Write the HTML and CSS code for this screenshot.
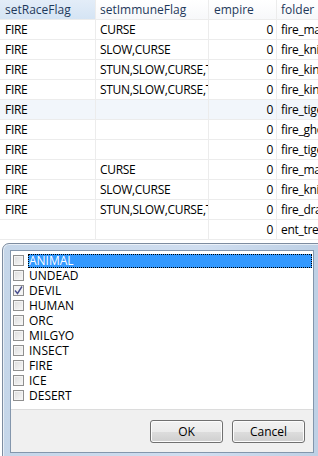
FILE: index.html
```html
<!DOCTYPE html>
<html lang="en">
  <head>
    <meta charset="UTF-8"/>
    <title>Mob flags</title>
    <link rel="stylesheet" href="styles.css">
  </head>
  <body>
    <div class="grid">
      <div class="row head">
        <div class="cell c1 sel">setRaceFlag</div>
        <div class="cell c2">setImmuneFlag</div>
        <div class="cell c3 left">empire</div>
        <div class="cell c4">folder</div>
      </div>
      <div class="row"><div class="cell c1">FIRE</div><div class="cell c2">CURSE</div><div class="cell c3">0</div><div class="cell c4">fire_mage</div></div>
      <div class="row"><div class="cell c1">FIRE</div><div class="cell c2">SLOW,CURSE</div><div class="cell c3">0</div><div class="cell c4">fire_knight</div></div>
      <div class="row"><div class="cell c1">FIRE</div><div class="cell c2">STUN,SLOW,CURSE,TERROR</div><div class="cell c3">0</div><div class="cell c4">fire_king</div></div>
      <div class="row"><div class="cell c1">FIRE</div><div class="cell c2">STUN,SLOW,CURSE,TERROR</div><div class="cell c3">0</div><div class="cell c4">fire_king</div></div>
      <div class="row tint"><div class="cell c1">FIRE</div><div class="cell c2"></div><div class="cell c3">0</div><div class="cell c4">fire_tiger</div></div>
      <div class="row"><div class="cell c1">FIRE</div><div class="cell c2"></div><div class="cell c3">0</div><div class="cell c4">fire_ghost</div></div>
      <div class="row"><div class="cell c1">FIRE</div><div class="cell c2"></div><div class="cell c3">0</div><div class="cell c4">fire_tiger</div></div>
      <div class="row"><div class="cell c1">FIRE</div><div class="cell c2">CURSE</div><div class="cell c3">0</div><div class="cell c4">fire_mage</div></div>
      <div class="row"><div class="cell c1">FIRE</div><div class="cell c2">SLOW,CURSE</div><div class="cell c3">0</div><div class="cell c4">fire_knight</div></div>
      <div class="row"><div class="cell c1">FIRE</div><div class="cell c2">STUN,SLOW,CURSE,TERROR</div><div class="cell c3">0</div><div class="cell c4">fire_dragon</div></div>
      <div class="row"><div class="cell c1"></div><div class="cell c2"></div><div class="cell c3">0</div><div class="cell c4">ent_tree</div></div>
    </div>

    <div class="dialog">
      <div class="dialog-inner">
        <ul class="flags">
          <li class="flag active"><span class="box"></span><span class="label">ANIMAL</span></li>
          <li class="flag"><span class="box"></span><span class="label">UNDEAD</span></li>
          <li class="flag"><span class="box checked"><svg width="9" height="9" viewBox="0 0 9 9"><path d="M1 4.5 L3.5 7.5 L8 0.5" fill="none" stroke="#4a4f8e" stroke-width="1.4"/></svg></span><span class="label">DEVIL</span></li>
          <li class="flag"><span class="box"></span><span class="label">HUMAN</span></li>
          <li class="flag"><span class="box"></span><span class="label">ORC</span></li>
          <li class="flag"><span class="box"></span><span class="label">MILGYO</span></li>
          <li class="flag"><span class="box"></span><span class="label">INSECT</span></li>
          <li class="flag"><span class="box"></span><span class="label">FIRE</span></li>
          <li class="flag"><span class="box"></span><span class="label">ICE</span></li>
          <li class="flag"><span class="box"></span><span class="label">DESERT</span></li>
        </ul>
        <div class="buttons">
          <button class="btn">OK</button>
          <button class="btn">Cancel</button>
        </div>
      </div>
    </div>
  </body>
</html>
```

FILE: styles.css
```css
body {
  margin: 0;
  width: 318px;
  height: 456px;
  overflow: hidden;
  position: relative;
  font-family: "Open Sans", "Noto Sans", sans-serif;
  font-size: 12px;
  color: #000;
  background: #fff;
}

.grid {
  width: 340px;
}
.row {
  display: flex;
  height: 20px;
  border-bottom: 1px solid #ececec;
  box-sizing: border-box;
}
.row.tint {
  background: #f2f6fb;
}
.cell {
  box-sizing: border-box;
  height: 19px;
  line-height: 19px;
  padding: 0 5px;
  white-space: nowrap;
  overflow: hidden;
  letter-spacing: -0.3px;
  border-right: 1px solid #ececec;
}
.c1 { width: 96px; }
.c2 { width: 113px; padding-left: 4px; }
.c3 { width: 68px; text-align: right; padding-right: 3px; }
.c4 { width: 63px; padding-left: 4px; border-right: 0; }

.head .cell {
  color: #1e395b;
  letter-spacing: 0;
  background: linear-gradient(#fff, #f7f8fa);
}
.head .c3.left { text-align: left; }
.head .cell.sel {
  background: linear-gradient(#e3edf8, #d5e4f4);
}

/* dialog window */
.dialog {
  position: absolute;
  left: 2px;
  top: 243px;
  width: 330px;
  height: 220px;
  box-sizing: border-box;
  border: 1px solid #7d8ca0;
  border-radius: 7px 7px 0 0;
  background: linear-gradient(90deg, #c5d6e9, #d0def0 60%, #bccfe4);
  padding: 6px 7px 0 7px;
  box-shadow: inset 0 0 0 1px rgba(255,255,255,0.6);
}
.dialog-inner {
  width: 302px;
  height: 201px;
  border: 1px solid #8396ac;
  background: #f0f0f0;
  display: flex;
  flex-direction: column;
}
.flags {
  list-style: none;
  margin: 0;
  padding: 2px 0 0 0;
  height: 159px;
  background: #fff;
  border-bottom: 1px solid #dcdcdc;
  box-sizing: border-box;
}
.flag {
  display: flex;
  align-items: center;
  height: 15px;
  line-height: 14px;
  padding-left: 2px;
}
.box {
  width: 11px;
  height: 11px;
  box-sizing: border-box;
  border: 1px solid #8f8f8f;
  background: linear-gradient(135deg, #dcdcdc, #f8f8f8);
  box-shadow: inset 0 0 0 1px #f4f4f4;
  margin-right: 4px;
  display: flex;
  align-items: center;
  justify-content: center;
}
.box.checked {
  background: #f4f4f4;
}
.label {
  height: 14px;
  padding: 0 2px 0 1px;
}
.flag.active .label {
  flex: 1;
  background: #3399ff;
  color: #fff;
  outline: 1px dotted #000;
  outline-offset: -1px;
  margin-right: 1px;
}

.buttons {
  display: flex;
  justify-content: flex-end;
  gap: 9px;
  padding: 10px 8px 0 0;
}
.btn {
  width: 73px;
  height: 23px;
  font-family: inherit;
  font-size: 12px;
  color: #000;
  border: 1px solid #707070;
  border-radius: 3px;
  background: linear-gradient(#f2f2f2 0%, #ebebeb 50%, #dddddd 51%, #cfcfcf 100%);
  box-shadow: inset 0 0 0 1px #fcfcfc;
  padding: 0;
}
```
